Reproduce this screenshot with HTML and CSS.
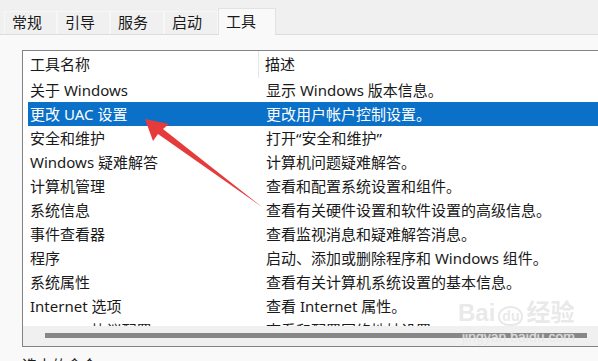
FILE: index.html
```html
<!DOCTYPE html>
<html lang="zh-CN">
<head>
    <meta charset="UTF-8">
    <title>系统配置 - 工具</title>
    <link rel="stylesheet" href="styles.css">
</head>
<body>
    <div class="tabs">
        <div class="tab">常规</div>
        <div class="tab">引导</div>
        <div class="tab">服务</div>
        <div class="tab">启动</div>
        <div class="tab active">工具</div>
    </div>

    <div class="panel">
        <div class="listbox">
            <div class="list-head">
                <div class="col-name">工具名称</div>
                <div class="col-desc">描述</div>
            </div>
            <div class="list-rows">
                <div class="row"><span class="col-name">关于 Windows</span><span class="col-desc">显示 Windows 版本信息。</span></div>
                <div class="row selected"><span class="col-name">更改 UAC 设置</span><span class="col-desc">更改用户帐户控制设置。</span></div>
                <div class="row"><span class="col-name">安全和维护</span><span class="col-desc">打开“安全和维护”</span></div>
                <div class="row"><span class="col-name">Windows 疑难解答</span><span class="col-desc">计算机问题疑难解答。</span></div>
                <div class="row"><span class="col-name">计算机管理</span><span class="col-desc">查看和配置系统设置和组件。</span></div>
                <div class="row"><span class="col-name">系统信息</span><span class="col-desc">查看有关硬件设置和软件设置的高级信息。</span></div>
                <div class="row"><span class="col-name">事件查看器</span><span class="col-desc">查看监视消息和疑难解答消息。</span></div>
                <div class="row"><span class="col-name">程序</span><span class="col-desc">启动、添加或删除程序和 Windows 组件。</span></div>
                <div class="row"><span class="col-name">系统属性</span><span class="col-desc">查看有关计算机系统设置的基本信息。</span></div>
                <div class="row"><span class="col-name">Internet 选项</span><span class="col-desc">查看 Internet 属性。</span></div>
                <div class="row"><span class="col-name">Internet 协议配置</span><span class="col-desc">查看和配置网络地址设置。</span></div>
            </div>
            <div class="hscroll">
                <div class="thumb"></div>
            </div>
        </div>
        <div class="command-label">选中的命令(C):</div>
    </div>

    <svg class="arrow" width="598" height="361" viewBox="0 0 598 361">
        <polygon points="145,119 169,124 163,129 262,207 158,134 153,141" fill="#e63b3b"/>
    </svg>

    <div class="watermark">
        <div class="wm-logo">Bai<span class="wm-paw">du</span>经验</div>
        <div class="wm-url">jingyan.baidu.com</div>
    </div>
</body>
</html>
```

FILE: styles.css
```css
body {
    margin: 0;
    width: 598px;
    height: 361px;
    overflow: hidden;
    position: relative;
    background-color: #f0f0f0;
    color: #1a1a1a;
    font-family: "Noto Sans", "Noto Sans CJK SC", sans-serif;
    font-size: 15px;
}

/* tab strip */
.tabs {
    display: flex;
    align-items: flex-end;
    height: 34px;
    padding-left: 4px;
    border-bottom: 1px solid #dcdcdc;
}

.tab {
    box-sizing: border-box;
    width: 53px;
    height: 23px;
    padding-left: 7px;
    line-height: 21px;
    background-color: #f0f0f0;
    border: 1px solid #f7f7f7;
    border-bottom: none;
}

.tab:nth-child(3),
.tab:nth-child(4) {
    width: 54px;
}

.tab.active {
    width: 58px;
    height: 27px;
    line-height: 24px;
    background-color: #f9f9f9;
    border-color: #e2e2e2;
    margin-bottom: -1px;
}

/* content panel */
.panel {
    background-color: #f9f9f9;
    height: 326px;
    padding: 15px 0 0 22px;
    box-sizing: border-box;
}

.listbox {
    background-color: #fff;
    border: 1px solid #838383;
    border-right: none;
    height: 297px;
    box-sizing: border-box;
    display: flex;
    flex-direction: column;
}

.list-head {
    display: flex;
    height: 27px;
    line-height: 27px;
    flex-shrink: 0;
}

.list-head .col-name {
    width: 236px;
    padding-left: 7px;
    box-sizing: border-box;
    border-right: 1px solid #e5e5e5;
}

.list-head .col-desc {
    padding-left: 6px;
}

.list-rows {
    height: 248px;
    overflow: hidden;
    flex-shrink: 0;
}

.row {
    display: flex;
    height: 24px;
    line-height: 24px;
    margin-left: 5px;
    white-space: nowrap;
}

.row .col-name {
    width: 238px;
    padding-left: 2px;
    box-sizing: border-box;
}

.row.selected {
    background-color: #0a70c8;
    color: #fff;
}

.hscroll {
    flex: 1;
    background-color: #f0f0f0;
    padding: 7px 0 0 22px;
    box-sizing: border-box;
}

.thumb {
    width: 542px;
    height: 5px;
    background-color: #878787;
}

.command-label {
    margin-top: 8px;
    line-height: 20px;
}

/* overlays */
.arrow {
    position: absolute;
    left: 0;
    top: 0;
    pointer-events: none;
}

.watermark {
    position: absolute;
    left: 458px;
    top: 296px;
    color: rgba(205, 205, 205, 0.45);
    pointer-events: none;
    text-shadow: 0 0 1px #fff;
}

.wm-logo {
    font-family: "Liberation Sans", "Noto Sans CJK SC", sans-serif;
    font-size: 24px;
    font-weight: bold;
    line-height: 34px;
}

.wm-paw {
    display: inline-block;
    border: 2px solid rgba(205, 205, 205, 0.45);
    border-radius: 50% 50% 45% 45%;
    font-size: 14px;
    line-height: 16px;
    padding: 0 2px;
    margin: 0 3px;
}

.wm-url {
    font-family: "Liberation Sans", sans-serif;
    font-size: 14px;
    line-height: 14px;
    padding-left: 4px;
}
```
